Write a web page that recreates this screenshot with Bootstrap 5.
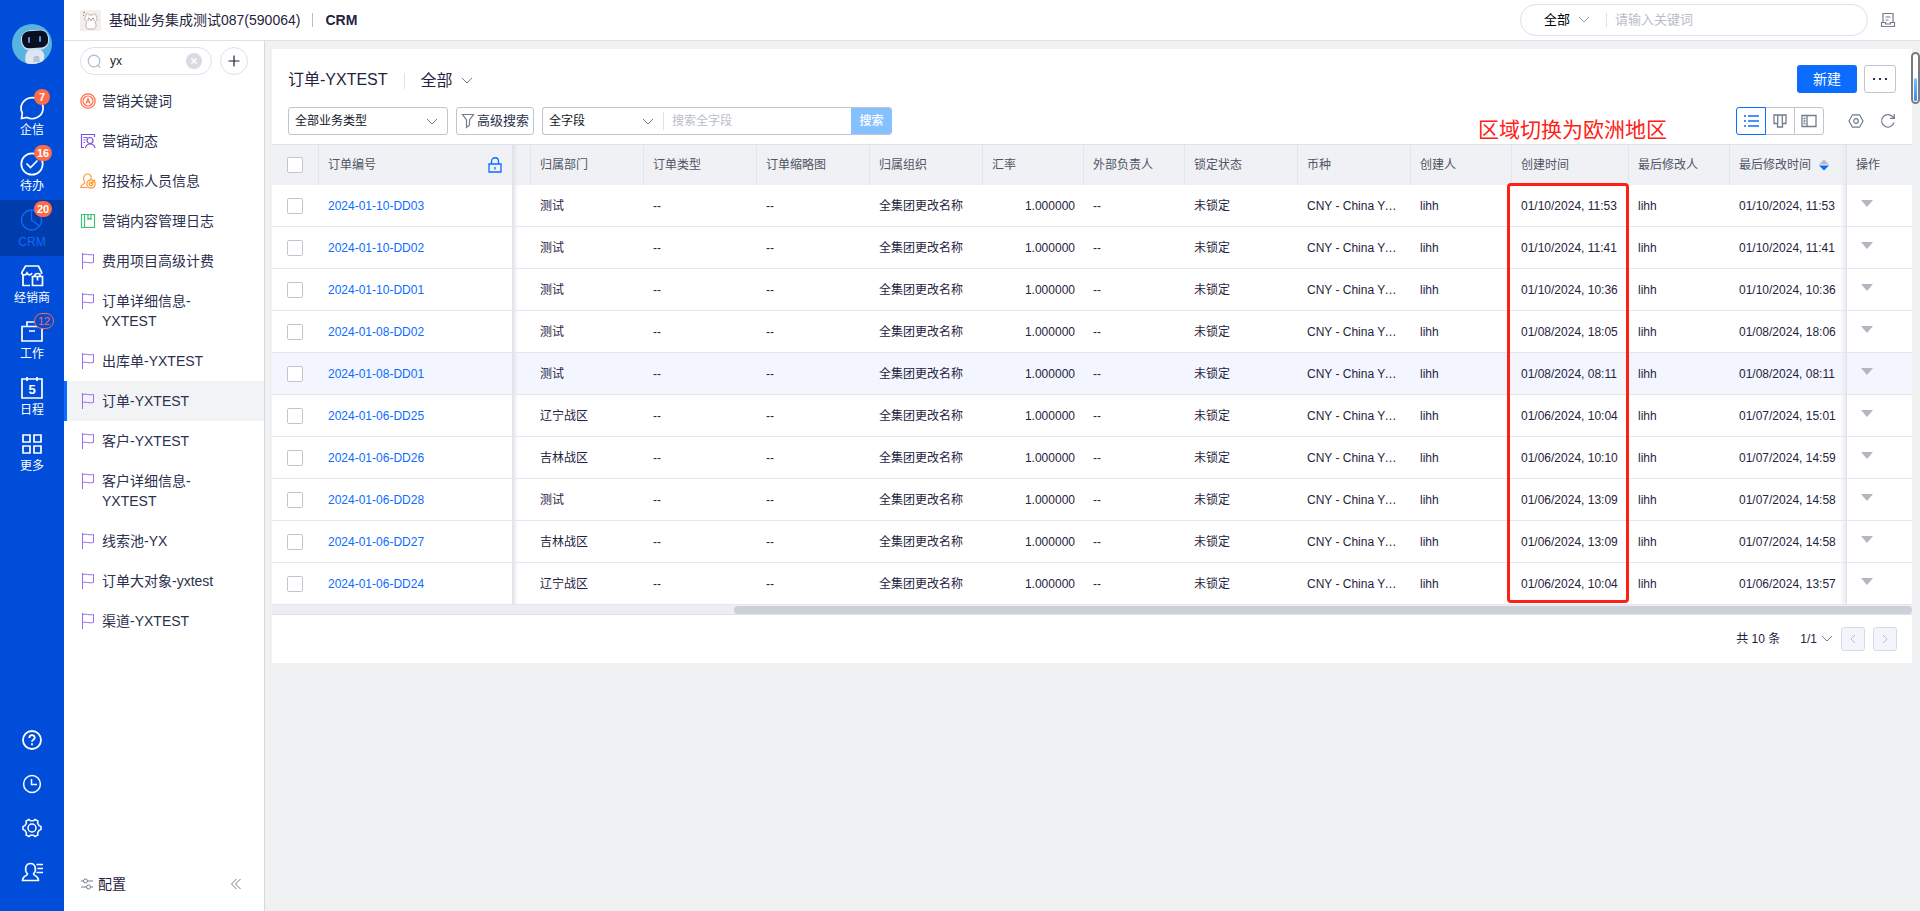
<!DOCTYPE html>
<html lang="zh-CN">
<head>
<meta charset="utf-8">
<meta name="viewport" content="width=device-width, initial-scale=1">
<title>CRM - 订单-YXTEST</title>
<link href="https://cdn.jsdelivr.net/npm/bootstrap@5.3.0/dist/css/bootstrap.min.css" rel="stylesheet">
<style>
  :root { --ink:#1f2440; --line:#dee1e8; --ctl:#c1c5ce; --brand:#0c6cff; --mute:#737c8c; }
  body { font-family:"Liberation Sans","Noto Sans CJK SC",sans-serif; font-size:12px; line-height:20px; color:var(--ink); background:#f0f1f3; }
  svg { display:block; flex:none; fill:none; stroke:currentColor; }
  svg.solid { stroke:none; }
  button { font:inherit; color:inherit; }
  a { text-decoration:none; color:inherit; }
  .fs-13 { font-size:13px; } .fs-14 { font-size:14px; } .fs-16 { font-size:16px; }
  .plain { border:0; background:none; padding:0; }
  .vline { width:1px; background:var(--line); }

  /* blue rail */
  .rail { width:64px; background:#004dd9; color:#fff; padding-top:24px; }
  .rail-list { margin-top:24px; }
  .rail-item { height:56px; position:relative; padding-top:8px; }
  .rail-item.active { background:#003cab; color:var(--brand); }
  .pip { position:absolute; left:34px; top:1px; min-width:16px; height:16px; padding:0 3px; border-radius:8px; background:#ff6a47; color:#fff; font-size:11px; font-weight:700; line-height:16px; text-align:center; }
  .pip-line { background:#004dd9; border:1px solid #ff6a47; color:#ff6a47; font-weight:400; line-height:14px; }
  .rail-foot { gap:24px; padding-bottom:29px; }

  /* top bar */
  .topbar { height:41px; background:#fff; border-bottom:1px solid var(--line); padding:0 24px 0 16px; }
  .topbar .vline { height:14px; }
  .crumb-line { margin:0 12px; }
  .topbar .crumb-line { background:#b9bdc8; }
  .site-search { width:348px; height:32px; border:1px solid var(--line); border-radius:16px; padding-left:23px; }
  .bare { border:0; outline:0; background:none; padding:0; min-width:0; color:inherit; }
  .bare::placeholder { color:#b9bdc8; opacity:1; }

  /* object menu */
  .side { width:201px; background:#fff; border-right:1px solid #d6d8e0; }
  .side-find { padding:6px 16px; gap:8px; }
  .find-pill { height:28px; min-width:0; border:1px solid var(--line); border-radius:14px; padding:0 9px 0 6px; color:#b6bac6; }
  .round-add { width:28px; height:28px; border:1px solid var(--line); border-radius:50%; background:#fff; color:#1d2233; }
  .side-list a { display:flex; gap:6px; padding:10px 25px 10px 16px; font-size:14px; line-height:20px; color:#2a304d; }
  .side-list svg { margin-top:2px; }
  .side-list a.active { background:#f1f3f5; box-shadow:inset 3px 0 0 var(--brand); }
  .side-foot { padding:0 22px 17px 16px; }
  .flag { color:#9a70e8; }

  /* work area */
  .work { padding:8px 8px 0 7px; }
  .sheet { background:#fff; position:relative; }
  .head-row { padding:16px 16px 0; }
  .head-row h1 { line-height:30px; }
  .head-row .vline { height:16px; }
  .view-pick { height:32px; }
  .tool-row { padding:10px 16px 9px; gap:8px; }
  .ctl { height:28px; border:1px solid var(--ctl); border-radius:3px; background-color:#fff; }
  .pick { appearance:none; color:#111526; background-image:url("data:image/svg+xml,%3Csvg xmlns='http://www.w3.org/2000/svg' width='12' height='8' fill='none' stroke='%23737c8c'%3E%3Cpath d='M1 1l5 5 5-5'/%3E%3C/svg%3E"); background-repeat:no-repeat; background-position:right 9px top 10px; padding-left:6px; }
  .pick-type { width:160px; }
  .pick-field { width:120px; }
  .btn-new { width:60px; height:28px; background:var(--brand); color:#fff; border:0; border-radius:3px; font-size:14px; }
  .btn-dots { width:32px; margin-left:7px; }
  .btn-adv { width:78px; gap:2px; white-space:nowrap; color:#2a304d; }
  .find-group { width:350px; border-right:0; }
  .btn-find { width:41px; background:#85c1ff; color:#fff; border:0; border-radius:0 3px 3px 0; font-weight:500; }
  .views button { width:30px; height:28px; border:1px solid var(--ctl); background:#fff; color:var(--mute); }
  .views button + button { margin-left:-1px; }
  .views button:first-child { border-color:var(--brand); color:var(--brand); border-radius:3px 0 0 3px; z-index:1; }
  .views button:last-child { border-radius:0 3px 3px 0; }

  /* order grid */
  .orders { width:100%; table-layout:fixed; border-collapse:separate; border-spacing:0; line-height:20px; }
  .orders th { height:41px; background:#f0f1f5; border-top:1px solid var(--line); border-right:1px solid #e3e5ee; font-weight:400; color:#4e5463; padding:0 9px; }
  .orders td { height:42px; border-bottom:1px solid #e5e7ee; padding:0 9px; white-space:nowrap; overflow:hidden; text-overflow:ellipsis; }
  .orders tr > :first-child { padding:0 0 0 15px; }
  .orders tr > :nth-child(3) { background-image:linear-gradient(90deg,#dfe1e8,rgba(232,234,240,0) 6px); padding:0; }
  .orders tr > :nth-child(15) { background-image:linear-gradient(270deg,#e8eaf0,rgba(236,238,243,0) 6px); border-right:1px solid #dfe2ec; }
  .orders th:last-child, .orders th:nth-child(2) { border-right-color:transparent; }
  .orders td:last-child { padding-left:14px; }
  .orders td:nth-child(8) { text-align:right; }
  .orders td a { color:var(--brand); }
  .orders tr.on td { background-color:#f3f6fe; }
  .orders input { appearance:none; display:block; width:16px; height:16px; margin:0; border:1px solid var(--ctl); border-radius:2px; background:#fff; }
  .more { border:0; padding:0; width:12px; height:7px; display:block; margin-top:-4px; background:#b4b7c0; clip-path:polygon(0 0,100% 0,50% 100%); }
  .slide { height:10px; padding-top:1px; background:#eceef3; border-bottom:1px solid var(--line); }
  .slide-thumb { height:8px; background:#cdd0d9; border-radius:4px; }
  .mark-box { position:absolute; right:283px; top:39px; width:122px; bottom:2px; border:3px solid #ff2015; border-radius:4px; pointer-events:none; }
  .mark-note { position:absolute; right:245px; top:67px; font-size:21px; line-height:28px; color:#ff2015; }
  .pager { height:48px; padding:0 15px; gap:8px; }
  .pager .step { width:24px; height:24px; border:1px solid #d8dbe6; border-radius:3px; background:#f2f5fc; color:#b9bdc8; }
  .grip { position:absolute; right:-8px; top:3px; width:9px; height:52px; border:2px solid #7b7b7d; border-radius:5px; background:#fff; padding:24px 1px 0; }
  .grip div { height:23px; border-radius:2px; background:linear-gradient(#74c4ff,#3d86f8); }
</style>
</head>
<body class="d-flex vh-100 overflow-hidden">

<svg width="0" height="0" class="position-absolute" aria-hidden="true">
  <symbol id="flag" viewBox="0 0 16 16"><path d="M2.500 0v16M2.500 1.500C6 .2 9 2.800 13.500 1.500v8C9 10.800 6 8.200 2.500 9.500"/></symbol>
  <symbol id="down" viewBox="0 0 12 8"><path d="M1 1l5 5 5-5"/></symbol>
</svg>

<nav class="rail d-flex flex-column flex-shrink-0">
  <svg class="mx-auto solid" width="40" height="40" viewBox="0 0 40 40"><circle cx="20" cy="20" r="20" fill="#57b4e0"/><path d="M14 39c-2-6 0-11 3-13h12c4 3 4 8 2 11-5 3-12 4-17 2z" fill="#dfe6f2"/><rect x="9" y="6" width="28" height="20" rx="9" fill="#cfe0f2" transform="rotate(-4 23 16)"/><rect x="10" y="7" width="26" height="17" rx="7" fill="#0a1022" transform="rotate(-4 22 15)"/><rect x="16" y="13" width="2" height="6" rx="1" fill="#5f8fe8"/><rect x="27" y="12" width="2" height="6" rx="1" fill="#5f8fe8"/><path d="M21 38l1-6h5l1 6z" fill="#b7c3da"/></svg>
  <div class="rail-list">
    <a href="#" class="rail-item d-flex flex-column align-items-center"><svg width="24" height="24" viewBox="0 0 24 24" stroke-width="1.700"><path d="M1.500 22.500L2.300 17A11 10.500 0 1 1 7 21.500z"/></svg>企信<span class="pip">7</span></a>
    <a href="#" class="rail-item d-flex flex-column align-items-center"><svg width="24" height="24" viewBox="0 0 24 24" stroke-width="1.700"><circle cx="12" cy="12" r="10.700"/><path d="M6.500 11.500l4 4 7-7"/></svg>待办<span class="pip">16</span></a>
    <a href="#" class="rail-item active d-flex flex-column align-items-center"><svg width="24" height="24" viewBox="0 0 24 24" stroke-width="1.300"><circle cx="11.500" cy="12" r="10"/><path d="M11.500 2v10l8 6"/></svg>CRM<span class="pip">20</span></a>
    <a href="#" class="rail-item d-flex flex-column align-items-center"><svg width="24" height="24" viewBox="0 0 24 24" stroke-width="1.700"><path d="M21.500 10V8l-3-6h-13l-3.700 6.500c0 3 3.700 3.500 5.200.5 1.500 2.500 4 2.500 5 0M3 11v10.500h7M12.500 12.500h10v9h-10zM14.500 12.500c0-4 6-4 6 0M17.500 12.500v4"/></svg>经销商</a>
    <a href="#" class="rail-item d-flex flex-column align-items-center"><svg width="24" height="24" viewBox="0 0 24 24" stroke-width="1.700"><path d="M2 6.500h20v14.500H2zM7 6V2h10v4M9 11h6"/></svg>工作<span class="pip pip-line">12</span></a>
    <a href="#" class="rail-item d-flex flex-column align-items-center"><svg width="24" height="24" viewBox="0 0 24 24" stroke-width="1.700"><path d="M2 3h20v19H2zM7 1v4M17 1v4"/><text x="12" y="17.500" font-size="13" font-weight="700" text-anchor="middle" fill="#fff" stroke="none">5</text></svg>日程</a>
    <a href="#" class="rail-item d-flex flex-column align-items-center"><svg width="24" height="24" viewBox="0 0 24 24" stroke-width="1.700"><path d="M3 3h7v7H3zM14 3h7v7h-7zM3 14h7v7H3zM14 14h7v7h-7z"/></svg>更多</a>
  </div>
  <div class="rail-foot mt-auto d-flex flex-column align-items-center">
    <a href="#" aria-label="帮助"><svg width="20" height="20" viewBox="0 0 20 20" stroke-width="1.800"><circle cx="10" cy="10" r="9"/><path d="M7.300 8c0-3.700 5.400-3.700 5.400-.3 0 2-2.700 2-2.700 4M10 13.300v2"/></svg></a>
    <a href="#" aria-label="历史"><svg width="20" height="20" viewBox="0 0 20 20" stroke-width="1.500"><circle cx="10" cy="10" r="8.400"/><path d="M9.500 5v5.500H15"/></svg></a>
    <a href="#" aria-label="设置"><svg width="20" height="20" viewBox="0 0 20 20" stroke-width="1.500"><path d="M7 1.500l1.500 1.300h3L13 1.500l3 1.700-.4 2 1.500 2.500 1.900.7v3.200l-1.900.7-1.500 2.500.4 2-3 1.700-1.500-1.300h-3L7 18.500l-3-1.700.4-2-1.500-2.500-1.900-.7V8.400l1.900-.7 1.500-2.500-.4-2z"/><circle cx="10" cy="10" r="4"/></svg></a>
    <a href="#" aria-label="联系人"><svg width="22" height="20" viewBox="0 0 22 20" stroke-width="1.600"><path d="M6.500 12C3 8 4.500 1.500 9.500 1.500S16 8 12.500 12c0 2 5 1.500 5 6.500h-16c0-5 5-4.500 5-6.500zM15.500 2.500H22M16.500 6.500H22M15.500 10.500H22"/></svg></a>
  </div>
</nav>

<div class="d-flex flex-column flex-grow-1 overflow-hidden">
  <header class="topbar d-flex align-items-center flex-shrink-0">
    <svg width="21" height="21" viewBox="0 0 21 21" color="#b59a91" stroke-width=".8"><path d="M0 0h21v21H0z" fill="#f2f0ee" stroke="none"/><path d="M6 6c0-3 2-3 3-1h4c1-2 3-2 3 1 2 2 1 5-1 6 2 3 1 6-1 7H8c-2-1-3-4-1-7-2-1-3-4-1-6z" fill="#fff"/><path d="M8 8l2 1M14 8l-2 1M10 10h2M3 3l2-1M3 6l1-1" stroke="#7c5d52"/><circle cx="8" cy="10" r="1" fill="#f3b6a8" stroke="none"/><circle cx="14" cy="10" r="1" fill="#f3b6a8" stroke="none"/></svg>
    <span class="fs-14 ms-2">基础业务集成测试087(590064)</span>
    <span class="vline crumb-line"></span>
    <a href="#" class="fs-14 fw-bold">CRM</a>
    <div class="site-search d-flex align-items-center ms-auto fs-13">
      <button class="plain d-flex align-items-center gap-2 text-black">全部<svg width="12" height="8" color="#a0a5b2"><use href="#down"/></svg></button>
      <span class="vline ms-3 me-2"></span>
      <input class="bare flex-grow-1" type="text" placeholder="请输入关键词" aria-label="请输入关键词">
    </div>
    <button class="plain ms-2 ps-1" aria-label="收件箱"><svg width="16" height="16" viewBox="0 0 16 16" color="#737c8c" stroke-width="1.200"><path d="M3 10V1.500h10V10M5.500 5h5M5.500 8h3M1.500 10.500h4v1.500h5v-1.500h4v4h-13z"/></svg></button>
  </header>

  <div class="d-flex flex-grow-1 overflow-hidden">
    <aside class="side d-flex flex-column flex-shrink-0">
      <div class="side-find d-flex">
        <div class="find-pill d-flex align-items-center flex-grow-1">
          <svg width="15" height="15" viewBox="0 0 15 15" stroke-width="1.200"><circle cx="7" cy="7" r="5.800"/><path d="M11 11.500l2 2"/></svg>
          <input class="bare w-100 ms-2 text-dark" type="text" value="yx" aria-label="搜索对象">
          <button class="plain" aria-label="清除"><svg width="16" height="16" viewBox="0 0 16 16"><circle cx="8" cy="8" r="8" fill="#d9dbe3" stroke="none"/><path d="M5.300 5.300l5.400 5.400M10.700 5.300l-5.400 5.400" stroke="#fff" stroke-width="1.600"/></svg></button>
        </div>
        <button class="round-add d-flex align-items-center justify-content-center flex-shrink-0 p-0" aria-label="添加"><svg width="12" height="12" viewBox="0 0 12 12" stroke-width="1.200"><path d="M6 .5v11M.5 6h11"/></svg></button>
      </div>
      <nav class="side-list">
        <a href="#"><svg width="16" height="16" viewBox="0 0 16 16" color="#ff6a47" stroke-width="1.200"><circle cx="8" cy="8" r="7.200"/><circle cx="8" cy="8" r="5"/><path d="M6 10.500L8 5.500l2 5M6.800 9h2.400"/></svg>营销关键词</a>
        <a href="#"><svg width="16" height="16" viewBox="0 0 16 16" color="#7b4fe0" stroke-width="1.200"><path d="M4 14.500H1.500v-13h13V4M3.500 4.500h4M3.500 7h2M3.500 9.500h1.500"/><circle cx="10" cy="7.500" r="3"/><path d="M5.500 15c.5-3 2-4 4.500-4s4.500 1 5 4"/></svg>营销动态</a>
        <a href="#"><svg width="16" height="16" viewBox="0 0 16 16" color="#ff9933" stroke-width="1.200"><path d="M7 14.500H.8c0-4 4-3 4-5C3 7 3 1 7.500 1s4 4.500 3 6"/><circle cx="11" cy="11" r="4.200"/><circle cx="11" cy="11" r="1.800"/><path d="M11 11l4-4"/></svg>招投标人员信息</a>
        <a href="#"><svg width="16" height="16" viewBox="0 0 16 16" color="#3dbf76" stroke-width="1.200"><path d="M1.500 1.500h13v13h-13zM4.500 1.500v13M8 1.500v5l1.500-1 1.500 1v-5"/></svg>营销内容管理日志</a>
        <a href="#"><svg width="16" height="16" class="flag"><use href="#flag"/></svg>费用项目高级计费</a>
        <a href="#"><svg width="16" height="16" class="flag"><use href="#flag"/></svg>订单详细信息-YXTEST</a>
        <a href="#"><svg width="16" height="16" class="flag"><use href="#flag"/></svg>出库单-YXTEST</a>
        <a href="#" class="active"><svg width="16" height="16" class="flag"><use href="#flag"/></svg>订单-YXTEST</a>
        <a href="#"><svg width="16" height="16" class="flag"><use href="#flag"/></svg>客户-YXTEST</a>
        <a href="#"><svg width="16" height="16" class="flag"><use href="#flag"/></svg>客户详细信息-YXTEST</a>
        <a href="#"><svg width="16" height="16" class="flag"><use href="#flag"/></svg>线索池-YX</a>
        <a href="#"><svg width="16" height="16" class="flag"><use href="#flag"/></svg>订单大对象-yxtest</a>
        <a href="#"><svg width="16" height="16" class="flag"><use href="#flag"/></svg>渠道-YXTEST</a>
      </nav>
      <div class="side-foot mt-auto d-flex align-items-center fs-14">
        <button class="plain d-flex align-items-center gap-1"><svg width="14" height="12" viewBox="0 0 14 12" color="#737c8c"><path d="M1 3h2.500M7.500 3H13M1 9h5.500M10.500 9H13"/><circle cx="5.500" cy="3" r="2"/><circle cx="8.500" cy="9" r="2"/></svg>配置</button>
        <button class="plain ms-auto" aria-label="收起"><svg width="12" height="12" viewBox="0 0 12 12" color="#737c8c"><path d="M6.500 1l-5 5 5 5M10.500 1l-5 5 5 5"/></svg></button>
      </div>
    </aside>

    <main class="work flex-grow-1 overflow-hidden">
      <div class="sheet">
        <div class="head-row d-flex">
          <h1 class="fs-16 fw-normal m-0">订单-YXTEST</h1>
          <span class="vline mx-3 mt-2"></span>
          <button class="plain view-pick d-flex align-items-center fs-16">全部<svg class="ms-2" width="12" height="8" color="#737c8c"><use href="#down"/></svg></button>
          <button class="btn-new ms-auto">新建</button>
          <button class="ctl btn-dots p-0 d-flex align-items-center justify-content-center" aria-label="更多操作"><svg class="solid" width="16" height="4" viewBox="0 0 16 4"><path d="M1 1h2v2H1zM7 1h2v2H7zM13 1h2v2h-2z" fill="#2a304d"/></svg></button>
        </div>
        <div class="tool-row d-flex">
          <select class="ctl pick pick-type" aria-label="业务类型"><option>全部业务类型</option></select>
          <button class="ctl btn-adv d-flex align-items-center justify-content-center fs-13 p-0"><svg width="14" height="16" viewBox="0 0 14 16" color="#737c8c" stroke-width="1.200"><path d="M1.500 1.500h11l-4 5.500v5l-3 2.500V7z"/></svg>高级搜索</button>
          <div class="ctl find-group d-flex align-items-stretch">
            <select class="bare pick pick-field" aria-label="字段"><option>全字段</option></select>
            <span class="vline my-1"></span>
            <input class="bare flex-grow-1 ms-2" type="text" placeholder="搜索全字段" aria-label="搜索全字段">
            <button class="btn-find p-0">搜索</button>
          </div>
          <div class="views d-flex ms-auto">
            <button class="p-0 d-flex align-items-center justify-content-center position-relative" aria-label="列表"><svg width="16" height="14" viewBox="0 0 16 14" stroke-width="1.300"><path d="M5 2h11M5 7h11M5 12h11M1 2h2M1 7h2M1 12h2"/></svg></button>
            <button class="p-0 d-flex align-items-center justify-content-center" aria-label="看板"><svg width="14" height="14" viewBox="0 0 14 14" stroke-width="1.300"><path d="M1 1h12v8.500H9.500V13h-5v-3.500H1zM4.800 1v9M9.300 1v9"/></svg></button>
            <button class="p-0 d-flex align-items-center justify-content-center" aria-label="分屏"><svg width="16" height="14" viewBox="0 0 16 14" stroke-width="1.300"><path d="M1 1.500h14v11H1zM6 1.500v11M2.500 4.500h2M2.500 7h2M2.500 9.500h2"/></svg></button>
          </div>
          <button class="plain ms-3" aria-label="列设置"><svg width="16" height="16" viewBox="0 0 16 16" color="#737c8c" stroke-width="1.200"><path d="M4.500 1.800h7L15 8l-3.500 6.200h-7L1 8z"/><circle cx="8" cy="8" r="2.300"/></svg></button>
          <button class="plain ms-2" aria-label="刷新"><svg width="16" height="16" viewBox="0 0 16 16" color="#737c8c" stroke-width="1.200"><path d="M14 9.500A6.300 6.300 0 1 1 12.500 3.500L14 5M14.300 1v4.300H10"/></svg></button>
        </div>
        <span class="mark-note">区域切换为欧洲地区</span>
        <div class="grip"><div></div></div>

        <div class="position-relative">
          <table class="orders">
            <colgroup><col style="width:47px"><col style="width:193px"><col style="width:19px"><col style="width:113px"><col style="width:113px"><col style="width:113px"><col style="width:113px"><col style="width:101px"><col style="width:101px"><col style="width:113px"><col style="width:113px"><col style="width:101px"><col style="width:117px"><col style="width:101px"><col style="width:117px"><col></colgroup>
            <thead>
              <tr><th><input type="checkbox" aria-label="全选"></th><th><div class="d-flex align-items-center justify-content-between">订单编号<svg width="14" height="16" viewBox="0 0 14 16" color="#0c6cff" stroke-width="1.300"><path d="M1 7h12v8H1zM3.500 7V4.500c0-5 7-5 7 0V7M7 10v2.500"/></svg></div></th><th></th><th>归属部门</th><th>订单类型</th><th>订单缩略图</th><th>归属组织</th><th>汇率</th><th>外部负责人</th><th>锁定状态</th><th>币种</th><th>创建人</th><th>创建时间</th><th>最后修改人</th><th><div class="d-flex align-items-center">最后修改时间<svg class="ms-2 solid" width="10" height="12" viewBox="0 0 10 12"><path d="M0 5.500L5 .5l5 5z" fill="#b8bcc6"/><path d="M0 6.500h10l-5 5z" fill="#0c6cff"/></svg></div></th><th>操作</th></tr>
            </thead>
            <tbody>
              <tr><td><input type="checkbox" aria-label="2024-01-10-DD03"></td><td><a href="#">2024-01-10-DD03</a></td><td></td><td>测试</td><td>--</td><td>--</td><td>全集团更改名称</td><td>1.000000</td><td>--</td><td>未锁定</td><td>CNY - China Yuan</td><td>lihh</td><td>01/10/2024, 11:53</td><td>lihh</td><td>01/10/2024, 11:53</td><td><button class="more" aria-label="操作"></button></td></tr>
              <tr><td><input type="checkbox" aria-label="2024-01-10-DD02"></td><td><a href="#">2024-01-10-DD02</a></td><td></td><td>测试</td><td>--</td><td>--</td><td>全集团更改名称</td><td>1.000000</td><td>--</td><td>未锁定</td><td>CNY - China Yuan</td><td>lihh</td><td>01/10/2024, 11:41</td><td>lihh</td><td>01/10/2024, 11:41</td><td><button class="more" aria-label="操作"></button></td></tr>
              <tr><td><input type="checkbox" aria-label="2024-01-10-DD01"></td><td><a href="#">2024-01-10-DD01</a></td><td></td><td>测试</td><td>--</td><td>--</td><td>全集团更改名称</td><td>1.000000</td><td>--</td><td>未锁定</td><td>CNY - China Yuan</td><td>lihh</td><td>01/10/2024, 10:36</td><td>lihh</td><td>01/10/2024, 10:36</td><td><button class="more" aria-label="操作"></button></td></tr>
              <tr><td><input type="checkbox" aria-label="2024-01-08-DD02"></td><td><a href="#">2024-01-08-DD02</a></td><td></td><td>测试</td><td>--</td><td>--</td><td>全集团更改名称</td><td>1.000000</td><td>--</td><td>未锁定</td><td>CNY - China Yuan</td><td>lihh</td><td>01/08/2024, 18:05</td><td>lihh</td><td>01/08/2024, 18:06</td><td><button class="more" aria-label="操作"></button></td></tr>
              <tr class="on"><td><input type="checkbox" aria-label="2024-01-08-DD01"></td><td><a href="#">2024-01-08-DD01</a></td><td></td><td>测试</td><td>--</td><td>--</td><td>全集团更改名称</td><td>1.000000</td><td>--</td><td>未锁定</td><td>CNY - China Yuan</td><td>lihh</td><td>01/08/2024, 08:11</td><td>lihh</td><td>01/08/2024, 08:11</td><td><button class="more" aria-label="操作"></button></td></tr>
              <tr><td><input type="checkbox" aria-label="2024-01-06-DD25"></td><td><a href="#">2024-01-06-DD25</a></td><td></td><td>辽宁战区</td><td>--</td><td>--</td><td>全集团更改名称</td><td>1.000000</td><td>--</td><td>未锁定</td><td>CNY - China Yuan</td><td>lihh</td><td>01/06/2024, 10:04</td><td>lihh</td><td>01/07/2024, 15:01</td><td><button class="more" aria-label="操作"></button></td></tr>
              <tr><td><input type="checkbox" aria-label="2024-01-06-DD26"></td><td><a href="#">2024-01-06-DD26</a></td><td></td><td>吉林战区</td><td>--</td><td>--</td><td>全集团更改名称</td><td>1.000000</td><td>--</td><td>未锁定</td><td>CNY - China Yuan</td><td>lihh</td><td>01/06/2024, 10:10</td><td>lihh</td><td>01/07/2024, 14:59</td><td><button class="more" aria-label="操作"></button></td></tr>
              <tr><td><input type="checkbox" aria-label="2024-01-06-DD28"></td><td><a href="#">2024-01-06-DD28</a></td><td></td><td>测试</td><td>--</td><td>--</td><td>全集团更改名称</td><td>1.000000</td><td>--</td><td>未锁定</td><td>CNY - China Yuan</td><td>lihh</td><td>01/06/2024, 13:09</td><td>lihh</td><td>01/07/2024, 14:58</td><td><button class="more" aria-label="操作"></button></td></tr>
              <tr><td><input type="checkbox" aria-label="2024-01-06-DD27"></td><td><a href="#">2024-01-06-DD27</a></td><td></td><td>吉林战区</td><td>--</td><td>--</td><td>全集团更改名称</td><td>1.000000</td><td>--</td><td>未锁定</td><td>CNY - China Yuan</td><td>lihh</td><td>01/06/2024, 13:09</td><td>lihh</td><td>01/07/2024, 14:58</td><td><button class="more" aria-label="操作"></button></td></tr>
              <tr><td><input type="checkbox" aria-label="2024-01-06-DD24"></td><td><a href="#">2024-01-06-DD24</a></td><td></td><td>辽宁战区</td><td>--</td><td>--</td><td>全集团更改名称</td><td>1.000000</td><td>--</td><td>未锁定</td><td>CNY - China Yuan</td><td>lihh</td><td>01/06/2024, 10:04</td><td>lihh</td><td>01/06/2024, 13:57</td><td><button class="more" aria-label="操作"></button></td></tr>
            </tbody>
          </table>
          <div class="mark-box"></div>
        </div>
        <div class="slide"><div class="slide-thumb ms-auto" style="width:71.8%"></div></div>
        <div class="pager d-flex align-items-center justify-content-end">
          <span class="me-2 pe-1">共 10 条</span>
          <button class="plain d-flex align-items-center gap-1">1/1<svg width="12" height="8" color="#737c8c"><use href="#down"/></svg></button>
          <button class="step p-0 d-flex align-items-center justify-content-center" aria-label="上一页"><svg width="8" height="12" viewBox="0 0 8 12"><path d="M6 2L2 6l4 4"/></svg></button>
          <button class="step p-0 d-flex align-items-center justify-content-center" aria-label="下一页"><svg width="8" height="12" viewBox="0 0 8 12"><path d="M2 2l4 4-4 4"/></svg></button>
        </div>
      </div>
    </main>
  </div>
</div>
<script src="https://cdn.jsdelivr.net/npm/bootstrap@5.3.0/dist/js/bootstrap.bundle.min.js"></script>
</body>
</html>
